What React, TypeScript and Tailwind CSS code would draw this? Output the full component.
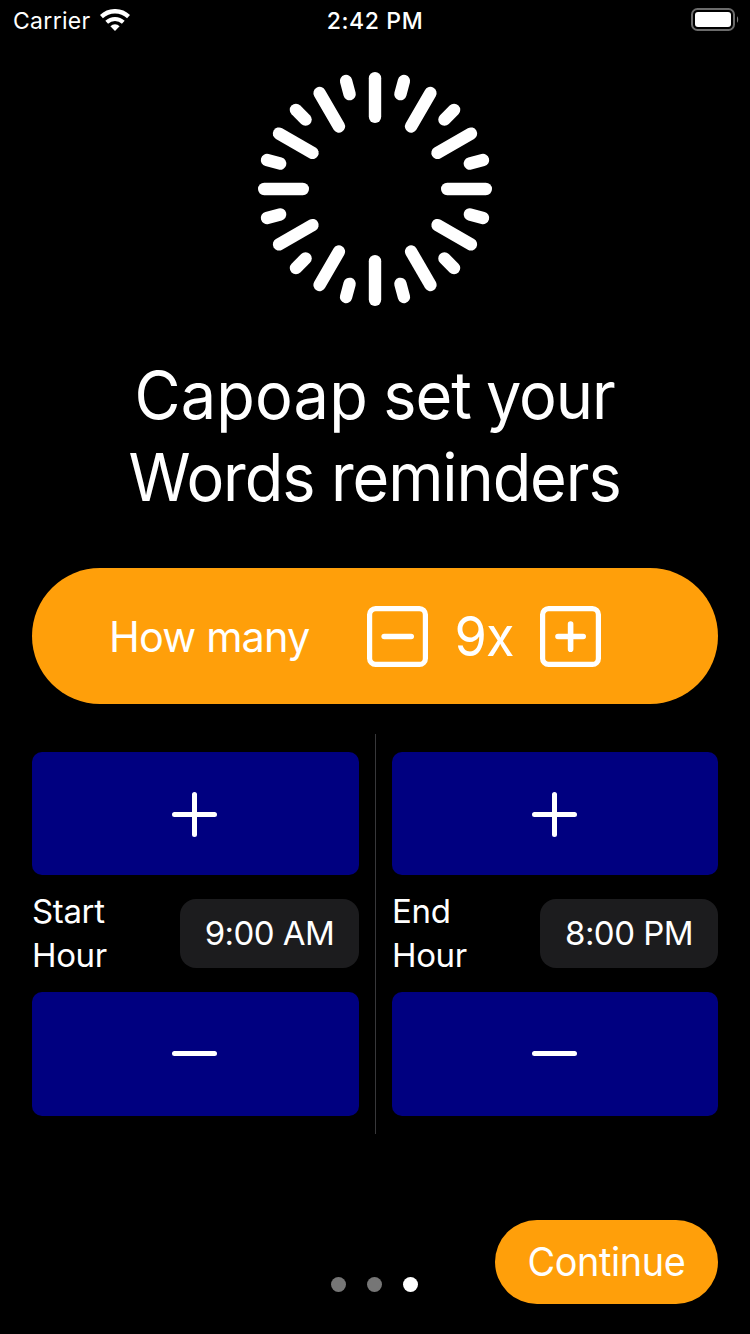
const longTicks = Array.from({ length: 12 }, (_, i) => i * 30);
const shortTicks = [15, 45, 75, 105, 135, 165, 195, 225, 255, 285, 315, 345];

function StatusBar() {
  return (
    <header className="grid h-10 w-full grid-cols-3 items-center pl-[13px] pr-[11px]">
      <div className="flex items-center gap-[9px]">
        <span className="pt-0.5 text-[23px] leading-9 tracking-[0.3px]">Carrier</span>
        <svg width="30" height="22" viewBox="-15 -22 30 22" fill="none" stroke="white">
          <path d="M-13.6 -14.4A19.8 19.8 0 0 1 13.6 -14.4" strokeWidth="4.4" />
          <path d="M-8.3 -8.8A12.1 12.1 0 0 1 8.3 -8.8" strokeWidth="4" />
          <path d="M0 0L-4.6 -4.8A6.7 6.7 0 0 1 4.6 -4.8Z" fill="white" stroke="none" />
        </svg>
      </div>
      <span className="pr-0.5 pt-0.5 text-center text-[23px] font-medium leading-9 tracking-[0.6px]">2:42 PM</span>
      <svg className="justify-self-end" width="48" height="24" viewBox="0 0 48 24" fill="none">
        <rect x="1" y="1" width="42" height="21" rx="5.5" stroke="#6b6b6b" strokeWidth="2" />
        <rect x="4" y="4" width="36" height="15" rx="3" fill="white" />
        <path d="M46 8.2C47.6 9.4 47.6 13.6 46 14.8Z" fill="#7a7a7a" />
      </svg>
    </header>
  );
}

function Rays() {
  return (
    <svg className="mt-8 shrink-0" width="234" height="234" viewBox="-117 -117 234 234" stroke="white" strokeWidth="12.4" strokeLinecap="round">
      {longTicks.map((a) => (
        <line key={a} x1="0" y1="-110.8" x2="0" y2="-72.2" transform={`rotate(${a})`} />
      ))}
      {shortTicks.map((a) => (
        <line key={a} x1="0" y1="-111.8" x2="0" y2="-98.2" transform={`rotate(${a})`} />
      ))}
    </svg>
  );
}

function SquareIcon({ plus }: { plus?: boolean }) {
  return (
    <svg width="61" height="61" viewBox="0 0 61 61" fill="none" stroke="white" strokeLinecap="round">
      <rect x="2.6" y="2.6" width="55.8" height="55.8" rx="6" strokeWidth="5.2" />
      {plus ? (
        <path d="M18 30.5H43.2M30.6 18V43.2" strokeWidth="5.6" />
      ) : (
        <path d="M17.2 30.5H44.2" strokeWidth="5.6" />
      )}
    </svg>
  );
}

function StepButton({ plus }: { plus?: boolean }) {
  return (
    <button
      className={
        plus
          ? "flex h-[123px] w-full justify-center rounded-[10px] bg-[#000080] pt-[39px]"
          : "flex h-[124px] w-full justify-center rounded-[10px] bg-[#000080] pt-[39px]"
      }
    >
      <svg className="mr-0.5" width="45" height="46" viewBox="0 0 45 46" fill="none" stroke="white" strokeWidth="5" strokeLinecap="round">
        <path d={plus ? "M2.5 23.5H42.5M22.5 3.5V43.5" : "M2.5 22.5H42.5"} />
      </svg>
    </button>
  );
}

function HourColumn({ label, time, wide }: { label: string; time: string; wide?: boolean }) {
  return (
    <div className={wide ? "flex w-[327px] flex-col py-[18px]" : "flex w-[326px] flex-col py-[18px]"}>
      <StepButton plus />
      <div className="flex h-[117px] items-start justify-between">
        <span className="w-[90px] pt-3.5 text-[33px] leading-[44px] tracking-[-0.35px]">{label}</span>
        <div
          className={
            wide
              ? "mt-6 flex h-[69px] w-[179px] items-center justify-center rounded-2xl bg-[#1c1c1e] pb-0.5"
              : "mt-6 flex h-[69px] w-[178px] items-center justify-center rounded-2xl bg-[#1c1c1e] pb-0.5"
          }
        >
          <span className="whitespace-nowrap text-[33px] leading-[44px] tracking-[-0.55px]">{time}</span>
        </div>
      </div>
      <StepButton />
    </div>
  );
}

export default function App() {
  return (
    <main className="flex h-[1334px] w-[750px] flex-col items-center overflow-hidden bg-black font-['Inter',sans-serif] text-white">
      <StatusBar />
      <Rays />
      <h1 className="mt-12 flex scale-x-[0.955] flex-col items-center text-[66px] font-normal leading-[82px]">
        <span className="tracking-[-1.1px] [word-spacing:-1.5px]">
          <span className="tracking-[0.2px]">Capoap</span> set your
        </span>
        <span className="tracking-[-1.15px]">Words reminders</span>
      </h1>
      <section className="mt-[50px] flex h-[136px] w-[686px] items-center rounded-full bg-[#ff9f0a] pl-[77px]">
        <div className="w-[258px]">
          <span className="inline-block origin-left scale-x-[0.975] whitespace-nowrap pt-0.5 text-[42.5px] tracking-[-0.85px]">How many</span>
        </div>
        <SquareIcon />
        <span className="w-28 whitespace-nowrap text-center text-[55px]">
          <span className="inline-block scale-x-[0.95] tracking-[-1px]">9x</span>
        </span>
        <SquareIcon plus />
      </section>
      <section className="mt-[30px] flex h-[400px] w-[686px]">
        <HourColumn label="Start Hour" time="9:00 AM" wide />
        <div className="ml-4 mr-4 h-full w-px bg-[#38383a]" />
        <HourColumn label="End Hour" time="8:00 PM" />
      </section>
      <footer className="mt-[86px] flex h-[84px] w-[686px] items-center">
        <div className="flex w-[463px] gap-[21px] pl-[299px] pt-11">
          <i className="size-[15px] rounded-full bg-[#767676]" />
          <i className="size-[15px] rounded-full bg-[#767676]" />
          <i className="size-[15px] rounded-full bg-white" />
        </div>
        <button className="h-[84px] w-[223px] whitespace-nowrap rounded-full bg-[#ff9f0a] text-[39px]">
          <span className="inline-block scale-x-[0.97] tracking-[-0.4px]">Continue</span>
        </button>
      </footer>
    </main>
  );
}
